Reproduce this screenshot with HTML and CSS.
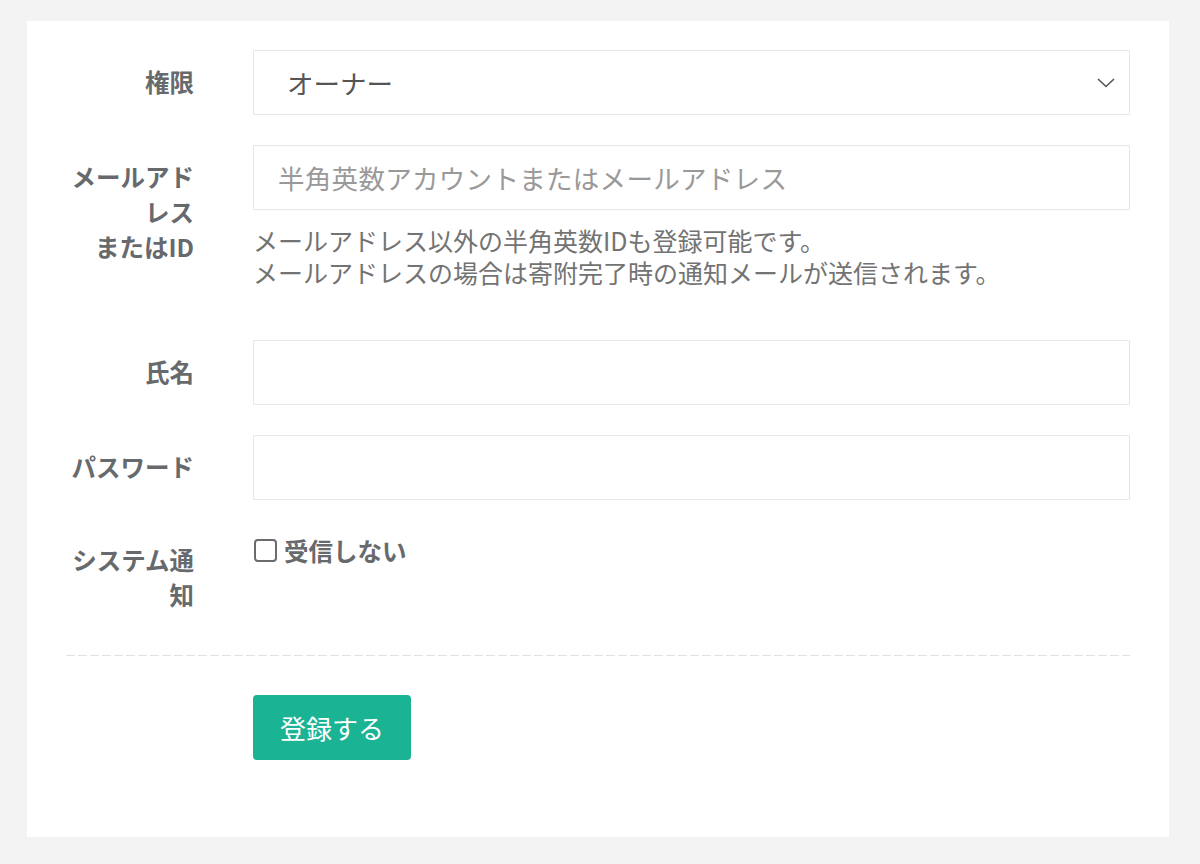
FILE: index.html
```html
<!DOCTYPE html>
<html lang="ja">
<head>
<meta charset="utf-8">
<title>ユーザー登録</title>
<link rel="stylesheet" href="styles.css">
</head>
<body>
<div class="card">
  <form class="form">
    <div class="row">
      <label class="label">権限</label>
      <div class="field">
        <div class="select">
          <span class="select-text">オーナー</span>
          <svg class="chevron" width="18" height="10" viewBox="0 0 18 10"><path d="M1 1 L9 8.5 L17 1" fill="none" stroke="#555" stroke-width="1.6"/></svg>
        </div>
      </div>
    </div>
    <div class="row">
      <label class="label">メールアドレス<br>またはID</label>
      <div class="field">
        <div class="input placeholder">半角英数アカウントまたはメールアドレス</div>
        <p class="help">メールアドレス以外の半角英数IDも登録可能です。<br>メールアドレスの場合は寄附完了時の通知メールが送信されます。</p>
      </div>
    </div>
    <div class="row">
      <label class="label">氏名</label>
      <div class="field"><div class="input"></div></div>
    </div>
    <div class="row">
      <label class="label">パスワード</label>
      <div class="field"><div class="input"></div></div>
    </div>
    <div class="row row-check">
      <label class="label">システム通知</label>
      <div class="field">
        <label class="check"><span class="box"></span><span class="check-text">受信しない</span></label>
      </div>
    </div>
    <div class="divider"></div>
    <div class="row row-btn">
      <div class="label"></div>
      <div class="field"><button type="button" class="btn">登録する</button></div>
    </div>
  </form>
</div>
</body>
</html>
```

FILE: styles.css
```css
* { box-sizing: border-box; }
html, body { margin: 0; padding: 0; }
body {
  background: #f3f3f4;
  font-family: "Noto Sans CJK JP", "Noto Sans", sans-serif;
  color: #676a6c;
  padding: 21px 31px 27px 27px;
}
.card {
  background: #fff;
  height: 816px;
  padding: 29px 39px 0 39px;
}
.row {
  display: flex;
  margin-bottom: 30px;
}
.label {
  width: 128px;
  flex: none;
  text-align: right;
  font-weight: bold;
  font-size: 24.5px;
  line-height: 35px;
  padding-top: 14px;
  color: #676a6c;
  word-break: break-all;
}
.field {
  flex: 1;
  margin-left: 59px;
}
.select, .input {
  height: 65px;
  border: 1px solid #e5e6e7;
  border-radius: 1px;
  background: #fff;
  display: flex;
  align-items: center;
  font-size: 26.5px;
  color: #555;
}
.select { padding: 0 14px 0 33px; justify-content: space-between; }
.input { padding: 0 24px; }
.placeholder { color: #999; letter-spacing: 0.3px; }
.help {
  margin: 14px 0 22px 0;
  font-size: 25px;
  line-height: 32px;
  color: #737373;
}
.row-check .label { padding-top: 12px; }
.row-check { margin-bottom: 43px; }
.check {
  display: flex;
  align-items: center;
  padding-top: 3px;
  font-weight: bold;
  font-size: 24.5px;
  color: #676a6c;
}
.box {
  width: 23px;
  height: 23px;
  border: 2px solid #6b6b6b;
  border-radius: 4px;
  margin-right: 7px;
  margin-left: 1px;
}
.divider {
  height: 1px;
  background: repeating-linear-gradient(to right, #e2e2e2 0 9px, transparent 9px 12px);
  margin-bottom: 39px;
}
.btn {
  height: 65px;
  padding: 0 27px;
  border: none;
  border-radius: 4px;
  background: #1ab394;
  color: #fff;
  font-family: inherit;
  font-size: 26px;
}
```
